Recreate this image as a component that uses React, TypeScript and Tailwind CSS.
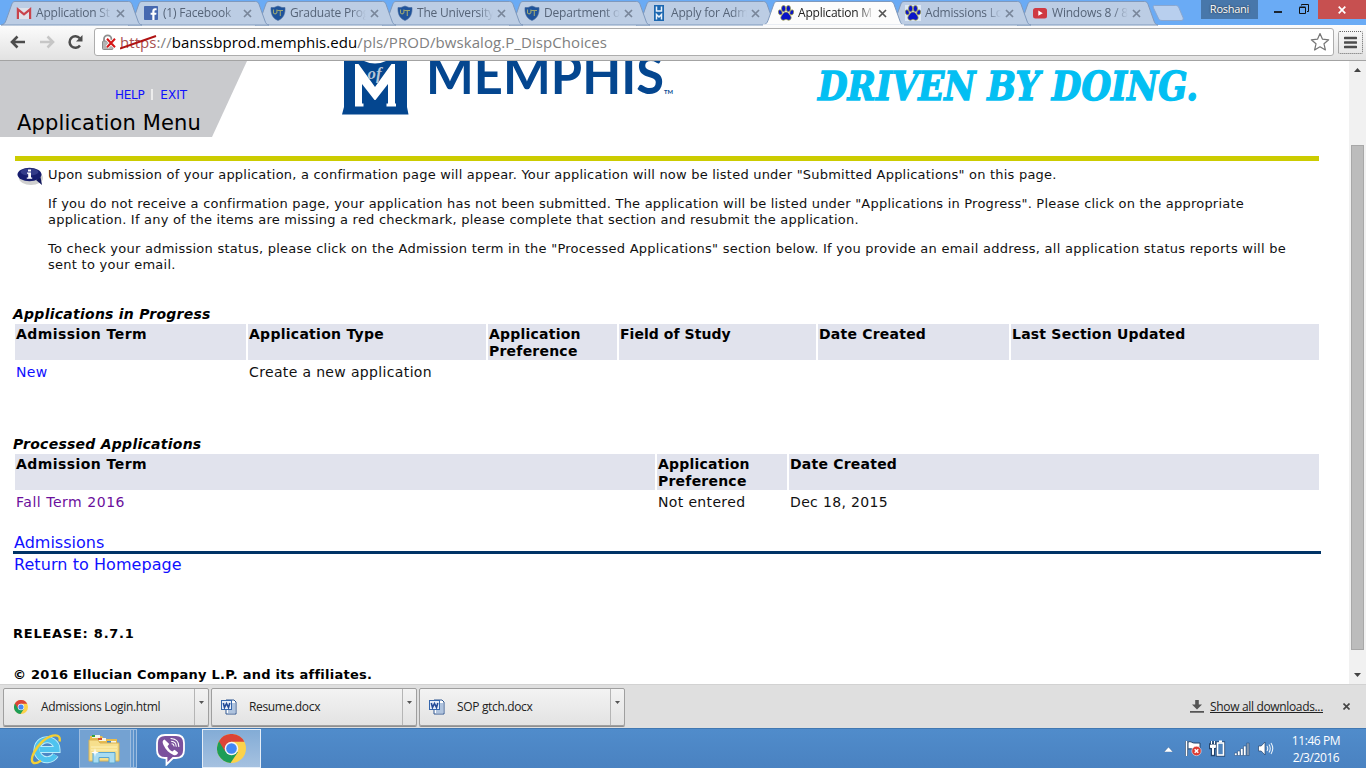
import type { CSSProperties, ReactNode } from 'react';

type Favicon = 'gmail' | 'facebook' | 'shield' | 'um' | 'paw' | 'youtube';

const tabs: { title: string; icon: Favicon; active?: boolean }[] = [
  { title: 'Application St', icon: 'gmail' },
  { title: '(1) Facebook', icon: 'facebook' },
  { title: 'Graduate Prog', icon: 'shield' },
  { title: 'The University', icon: 'shield' },
  { title: 'Department o', icon: 'shield' },
  { title: 'Apply for Adm', icon: 'um' },
  { title: 'Application M', icon: 'paw', active: true },
  { title: 'Admissions Lo', icon: 'paw' },
  { title: 'Windows 8 / 8', icon: 'youtube' },
];

function Paw() {
  return (
    <g fill="#0a14c8" stroke="#a9a83a" strokeWidth="0.7">
      <ellipse cx="5.6" cy="3.6" rx="2.1" ry="3.2" />
      <ellipse cx="10.4" cy="3.6" rx="2.1" ry="3.2" />
      <ellipse cx="2.2" cy="7.4" rx="1.9" ry="2.6" transform="rotate(-20 2.2 7.4)" />
      <ellipse cx="13.8" cy="7.4" rx="1.9" ry="2.6" transform="rotate(20 13.8 7.4)" />
      <path d="M8 7c2.200 0 3 1.900 4.100 3.200 1 1.200 1.400 2.500.8 3.600-.7 1.500-2.200 1.700-3.300 1.100-1-.5-2.200-.5-3.200 0-1.100.6-2.600.4-3.300-1.100-.6-1.100-.2-2.400.8-3.600C5 8.900 5.800 7 8 7z" />
    </g>
  );
}

function FaviconIcon({ icon, active }: { icon: Favicon; active?: boolean }) {
  return (
    <svg className="size-4 shrink-0" viewBox="0 0 16 16">
      {icon === 'gmail' && (
        <>
          <path d="M1 3h14v11H1z" fill="#dfe2ea" />
          <path d="M1.900 14V4.300L8 9.300l6.100-5V14" fill="none" stroke="#c9444c" strokeWidth="2.200" />
        </>
      )}
      {icon === 'facebook' && (
        <>
          <rect x="1" y="1" width="14" height="14" rx="0.8" fill="#4668b0" />
          <path d="M9.300 15V9.800H7.600V7.700h1.700V6.200c0-1.900 1-2.900 2.800-2.900h1.500v2h-1c-.8 0-1.100.4-1.100 1.100v1.300h2l-.3 2.100h-1.700V15z" fill="#fff" />
        </>
      )}
      {icon === 'shield' && (
        <>
          <path d="M1 2.500 4 2.500 8 1l4 1.500h3c.3 5.500-1 10.500-7 13C2 13 .7 8 1 2.500z" fill="#1f539b" stroke="#47699c" strokeWidth="0.6" />
          <path d="M3.500 4.500v3.500q1.700 2 3.400-.5V4.500M7.500 5.500H13M10.300 5.500v5.500" fill="none" stroke="#9aa574" strokeWidth="1.100" />
        </>
      )}
      {icon === 'um' && (
        <>
          <rect x="3" y="0" width="10" height="16" fill="#1c67b0" />
          <path d="M5.500 1.500V6h5V1.500M5.500 14.500v-5L8 12l2.500-2.500v5" fill="none" stroke="#eaf2fb" strokeWidth="1.500" />
        </>
      )}
      {icon === 'paw' && (
        <>
          {!active && <rect width="16" height="16" fill="#dde8f6" />}
          <Paw />
        </>
      )}
      {icon === 'youtube' && (
        <>
          <rect x="1" y="3" width="14" height="10.500" rx="2.500" fill="#cf3a42" />
          <path d="M6.300 5.500v5.300l4.500-2.600z" fill="#fff" />
        </>
      )}
    </svg>
  );
}

function BrowserTab({ title, icon, active, order }: { title: string; icon: Favicon; active?: boolean; order: number }) {
  const stack: CSSProperties = { zIndex: active ? 30 : 20 - order };
  return (
    <div className="relative h-[25px] w-[127px] shrink-0" style={stack}>
      <svg className="absolute top-0 left-0 overflow-visible" width="145" height="25" viewBox="0 0 145 25">
        <path
          d="M1 25c3-.5 4-2 5-4.500l5.500-15.500C12.500 2.500 13 1.500 15 1.500h113.500c2 0 2.800 1 3.600 3L138 21c.8 2.500 1.800 3.500 4 4z"
          fill={active ? '#fcfcfc' : '#bccde4'}
          stroke="#7f99bd"
          strokeWidth="1"
        />
        {active && <rect x="1" y="24.300" width="141" height="1.700" fill="#fcfcfc" />}
      </svg>
      <div className="relative flex h-[25px] w-[130px] items-center pt-[1px] pl-4">
        <FaviconIcon icon={icon} active={active} />
        <div
          className={
            'ml-1 w-[76px] overflow-hidden font-["Open_Sans",sans-serif] text-[12px] leading-4 tracking-[-0.2px] whitespace-nowrap [mask-image:linear-gradient(to_right,black_80%,transparent_100%)] ' +
            (active ? 'text-[#222]' : 'text-[#566478]')
          }
        >
          {title}
        </div>
        <svg className="ml-[4px] size-[9px] shrink-0" viewBox="0 0 9 9">
          <path d="M1 1l7 7M8 1L1 8" stroke={active ? '#555' : '#79869a'} strokeWidth="1.700" />
        </svg>
      </div>
    </div>
  );
}

function TabStrip() {
  return (
    <div className="flex h-[25px] bg-[#6aabf5]">
      {tabs.map((t, i) => (
        <BrowserTab key={i} order={i} {...t} />
      ))}
      <svg className="mt-[4px] ml-[8px] shrink-0" width="34" height="18" viewBox="0 0 34 18">
        <path d="M3.500 1.500h21c2 0 2.800.7 3.500 2.500l4 9.500c.7 2-.1 3-2 3H11c-2 0-3-.7-3.700-2.500L2.500 4c-.6-1.500-.4-2.500 1-2.500z" fill="#b8cfee" stroke="#8aa7d0" />
      </svg>
      <div className="ml-[16px] flex h-[19px] w-[57px] shrink-0 items-center justify-center bg-[#4877aa] font-['Open_Sans',sans-serif] text-[11px] tracking-[-0.25px] text-white [text-shadow:0_0_2px_#222]">
        Roshani
      </div>
      <div className="mt-[11px] ml-4 h-[2px] w-2 shrink-0 bg-[#1b2530]" />
      <svg className="mt-1 ml-[17px] shrink-0" width="10" height="10" viewBox="0 0 10 10">
        <path d="M.5 3.500h6v6h-6zM.5 3h6M2.500 1.500v-1h7v7h-1.500" fill="none" stroke="#111" />
      </svg>
      <div className="ml-auto flex h-[19px] w-12 shrink-0 items-center justify-center bg-[#c75050]">
        <svg width="8" height="8" viewBox="0 0 8 8">
          <path d="M.7.7l6.600 6.600M7.300.7L.7 7.300" stroke="#fff" strokeWidth="1.700" />
        </svg>
      </div>
    </div>
  );
}

function Toolbar() {
  return (
    <div className="flex h-9 items-center border-b border-[#a3a3a3] bg-linear-to-b from-[#fcfcfc] to-[#e2e2e2] pb-px">
      <svg className="ml-[10px]" width="16" height="14" viewBox="0 0 16 14">
        <path d="M15 7H3M7.500 1.500L2 7l5.500 5.500" fill="none" stroke="#4c4c4c" strokeWidth="2.600" />
      </svg>
      <svg className="ml-[13px]" width="16" height="14" viewBox="0 0 16 14">
        <path d="M1 7h12M8.500 1.500L14 7l-5.500 5.500" fill="none" stroke="#c6c6c6" strokeWidth="2.600" />
      </svg>
      <svg className="ml-[12px]" width="17" height="16" viewBox="0 0 17 16">
        <path d="M13 11.500A5.800 5.800 0 1 1 12.800 4.200" fill="none" stroke="#4c4c4c" strokeWidth="2.500" />
        <path d="M15.500 1v6.500H9z" fill="#4c4c4c" />
      </svg>
      <div className="ml-[10px] flex h-[28px] w-[1240px] items-center rounded-[3px] border border-[#adadad] bg-white">
        <svg className="ml-[6px] shrink-0" width="16" height="17" viewBox="0 0 16 17">
          <path d="M3 7.500V5a3.700 3.700 0 0 1 7.400 0v2.500" fill="none" stroke="#8e8e8e" strokeWidth="1.800" />
          <rect x="1.500" y="7" width="10.500" height="8.500" rx="1" fill="#b4b4b4" stroke="#8a8a8a" />
          <path d="M6 4.800l8 8.500M14 4.800l-8 8.500" stroke="#fff" strokeWidth="3.600" />
          <path d="M6 4.800l8 8.500M14 4.800l-8 8.500" stroke="#d51515" strokeWidth="2" />
        </svg>
        <div className="relative ml-[3px] w-[1190px] font-['Open_Sans',sans-serif] text-[15px] leading-5 tracking-[0.075px] whitespace-nowrap text-[#808080]">
          <span className="text-[#a8504f]">https</span>://<span className="text-black">banssbprod.memphis.edu</span>/pls/PROD/bwskalog.P_DispChoices
          <svg className="absolute top-[2px] left-0" width="38" height="16" viewBox="0 0 38 16">
            <path d="M0 14.500L36 2" stroke="#b01212" strokeWidth="1.900" />
          </svg>
        </div>
        <svg className="shrink-0" width="20" height="20" viewBox="0 0 20 20">
          <path d="M10 1.500l2.500 5.700 6.200.6-4.700 4 1.400 6.200L10 14.800 4.600 18 6 11.800l-4.700-4 6.200-.6z" fill="#fff" stroke="#757575" strokeWidth="1.200" strokeLinejoin="round" />
        </svg>
      </div>
      <div className="ml-1 flex h-[23px] w-[25px] items-center justify-center rounded-[2px] border border-dotted border-[#666]">
        <svg width="13" height="13" viewBox="0 0 13 13">
          <path d="M1 2h11M1 6.500h11M1 11h11" stroke="#4c4c4c" strokeWidth="2.600" strokeLinecap="round" />
        </svg>
      </div>
    </div>
  );
}

function Banner() {
  return (
    <div className="relative flex h-[76px] overflow-hidden">
      <div className="h-[76px] w-[247px] shrink-0 bg-[#c9cacd] pt-[25px] [clip-path:polygon(0_0,247px_0,212px_100%,0_100%)]">
        <div className="flex h-[17px] items-center pl-[115px] font-['DejaVu_Sans',sans-serif] text-[12px] text-[#1010ff]">
          <span className="tracking-[-0.3px]">HELP</span>
          <span className="ml-[7px] h-[11px] w-[2px] bg-[#ececec]" />
          <span className="ml-[7px]">EXIT</span>
        </div>
        <h1 className="mt-[7px] pl-[17px] font-['DejaVu_Sans',sans-serif] text-[21px] leading-[26px] tracking-[0.146px] text-black">Application Menu</h1>
      </div>
      <svg className="ml-[95px] shrink-0" width="340" height="60" viewBox="342 61 340 60">
        <path d="M344 61h63v46l1.500 7.500H342l2-7.500z" fill="#04468f" />
        <path d="M364 61q11 5 22 0z" fill="#fff" />
        <path d="M355 64h3.500L375 87l16.500-23H395v39.500h1v3h-9.500v-3H388V84l-12.500 16h-1L362 84v19.500h1.500v3H355z" fill="#fff" />
        <text x="367.500" y="78.500" fontFamily="Liberation Serif, serif" fontStyle="italic" fontWeight="700" fontSize="17" textLength="14" lengthAdjust="spacingAndGlyphs" fill="#b5c5d8">of</text>
        <text x="426" y="93.700" fontFamily="Lato, sans-serif" fontWeight="700" fontSize="53" textLength="238" lengthAdjust="spacingAndGlyphs" fill="#04468f">MEMPHIS</text>
        <text x="664" y="93.500" fontFamily="Lato, sans-serif" fontWeight="700" fontSize="6" textLength="9" lengthAdjust="spacingAndGlyphs" fill="#04468f">TM</text>
      </svg>
      <svg className="ml-[128px] shrink-0" width="400" height="60" viewBox="810 61 400 60">
        <text x="818" y="99.500" fontFamily="DejaVu Serif, serif" fontStyle="italic" fontWeight="700" fontSize="40" textLength="380" lengthAdjust="spacingAndGlyphs" fill="#03bff3" stroke="#03bff3" strokeWidth="1.400">DRIVEN BY DOING.</text>
      </svg>
    </div>
  );
}

function Instructions() {
  return (
    <div className="mt-[6px] flex pl-4">
      <svg className="shrink-0" width="30" height="22" viewBox="0 0 30 22">
        <ellipse cx="15" cy="11" rx="12" ry="7" fill="#bbb" opacity="0.700" />
        <path d="M20 13l6 5-1.500-8z" fill="#10165c" />
        <ellipse cx="13.500" cy="7.500" rx="12" ry="6.700" fill="#161d6e" />
        <ellipse cx="13.500" cy="5" rx="9" ry="3.500" fill="#47509b" opacity="0.600" />
        <path d="M12 2.500h3v2h-3zM11 5.500h4v5h1.200v1.300H10.800v-1.300h1.400V6.800H11z" fill="#fff" />
      </svg>
      <div className="ml-[2px] flex flex-col gap-[13px] font-['DejaVu_Sans',sans-serif] text-[13px] leading-4 tracking-[0.212px] whitespace-nowrap text-[#111]">
        <p>Upon submission of your application, a confirmation page will appear. Your application will now be listed under "Submitted Applications" on this page.</p>
        <p>
          If you do not receive a confirmation page, your application has not been submitted. The application will be listed under "Applications in Progress". Please click on the appropriate
          <br />
          <span className="tracking-[0.22px]">application. If any of the items are missing a red checkmark, please complete that section and resubmit the application.</span>
        </p>
        <p>
          <span className="tracking-[0.254px]">To check your admission status, please click on the Admission term in the "Processed Applications" section below. If you provide an email address, all application status reports will be</span>
          <br />
          <span className="tracking-[0.26px]">sent to your email.</span>
        </p>
      </div>
    </div>
  );
}

function HeadCell({ children }: { children: ReactNode }) {
  return <div className="h-9 bg-[#e1e3ed] pt-[2px] pl-px text-[14px] leading-[17px] font-bold tracking-[0.22px]">{children}</div>;
}

function Cell({ children }: { children?: ReactNode }) {
  return <div className="pt-px pb-[2px] pl-px text-[14px] leading-[18px] tracking-[0.35px] text-[#111]">{children}</div>;
}

function SectionTitle({ children }: { children: ReactNode }) {
  return <h2 className="h-[18px] pl-[13px] text-[14px] leading-4 font-bold tracking-[0.255px] italic">{children}</h2>;
}

function Page() {
  return (
    <div className="h-[624px] w-[1349px] overflow-hidden bg-white font-['DejaVu_Sans',sans-serif] text-black">
      <Banner />
      <div className="mt-[19px] ml-[15px] h-[5px] w-[1304px] bg-[#cccc00]" />
      <Instructions />
      <div className="mt-[33px]">
        <SectionTitle>Applications in Progress</SectionTitle>
        <div className="ml-[15px] grid w-[1304px] grid-cols-[231px_238px_129px_197px_191px_1fr] gap-x-[2px] gap-y-[2px]">
          <HeadCell><span className="tracking-[0.44px]">Admission Term</span></HeadCell>
          <HeadCell><span className="tracking-[0.27px]">Application Type</span></HeadCell>
          <HeadCell>Application<br />Preference</HeadCell>
          <HeadCell><span className="tracking-[0.05px]">Field of Study</span></HeadCell>
          <HeadCell>Date Created</HeadCell>
          <HeadCell>Last Section Updated</HeadCell>
          <Cell><a className="text-[#1010ff]">New</a></Cell>
          <Cell>Create a new application</Cell>
        </div>
      </div>
      <div className="mt-[53px]">
        <SectionTitle>Processed Applications</SectionTitle>
        <div className="ml-[15px] grid w-[1304px] grid-cols-[640px_130px_1fr] gap-x-[2px] gap-y-[2px]">
          <HeadCell><span className="tracking-[0.44px]">Admission Term</span></HeadCell>
          <HeadCell>Application<br />Preference</HeadCell>
          <HeadCell>Date Created</HeadCell>
          <Cell><a className="tracking-[0.53px] text-[#6b0f9c]">Fall Term 2016</a></Cell>
          <Cell>Not entered</Cell>
          <Cell>Dec 18, 2015</Cell>
        </div>
      </div>
      <div className="mt-[19px] ml-[13px] w-[1308px] text-[16px] leading-[22px] text-[#1010ff]">
        <div className="h-[19px] pl-px">Admissions</div>
        <div className="h-[3px] bg-[#003366]" />
        <div className="pl-px tracking-[0.065px]">Return to Homepage</div>
      </div>
      <div className="mt-[50px] ml-[13px] text-[13px] leading-4 font-bold">
        <div className="tracking-[0.75px]">RELEASE: 8.7.1</div>
        <div className="mt-[25px] tracking-[0.258px]">© 2016 Ellucian Company L.P. and its affiliates.</div>
      </div>
    </div>
  );
}

function Scrollbar() {
  return (
    <div className="flex h-[624px] w-[17px] flex-col items-center bg-[#f1f1f1]">
      <svg className="mt-[7px] shrink-0" width="7" height="4" viewBox="0 0 7 4"><path d="M0 4L3.500 0 7 4z" fill="#444" /></svg>
      <div className="mt-[73px] h-[505px] w-[13px] shrink-0 border border-[#a8a8a8] bg-[#bcbcbc]" />
      <svg className="mt-[23px] shrink-0" width="7" height="4" viewBox="0 0 7 4"><path d="M0 0h7L3.500 4z" fill="#444" /></svg>
    </div>
  );
}

function ChromeLogo({ size }: { size: number }) {
  return (
    <svg className="shrink-0" width={size} height={size} viewBox="0 0 30 30">
      <circle cx="15" cy="15" r="15" fill="#fcd24a" />
      <path d="M15 15L2 7.500A15 15 0 0 0 14 30l7.500-11z" fill="#1d9d57" />
      <path d="M15 8h13.300A15 15 0 0 0 2 7.500L8.500 18z" fill="#dc4437" />
      <circle cx="15" cy="15" r="7" fill="#f5f5f5" />
      <circle cx="15" cy="15" r="5.500" fill="#4387f4" />
    </svg>
  );
}

function WordIcon() {
  return (
    <svg className="shrink-0" width="16" height="16" viewBox="0 0 16 16">
      <path d="M5 1h8l2 2v12H5z" fill="#fff" stroke="#2c5590" />
      <path d="M11 5h3M11 7h3M11 9h3M7 11h7M7 13h7" stroke="#5f87bd" />
      <rect x="0.500" y="1.500" width="10" height="9" fill="#e8effa" stroke="#3667ad" />
      <path d="M2.300 4l1.200 4.500L5.500 4.500l2 4L8.800 4" fill="none" stroke="#244b98" strokeWidth="1.600" />
    </svg>
  );
}

function Download({ name, icon }: { name: string; icon: ReactNode }) {
  return (
    <div className="flex h-[38px] w-[206px] rounded-[2px] border border-[#9f9f9f] bg-linear-to-b from-[#f3f3f3] to-[#e3e3e3] shadow-[0_1px_0_#8f8f8f]">
      <div className="flex w-[191px] items-center border-r border-[#b5b5b5] pl-[9px]">
        <span className="flex w-7 shrink-0 items-center">{icon}</span>
        <span className="font-['Open_Sans',sans-serif] text-[12px] tracking-[-0.34px] text-[#222]">{name}</span>
      </div>
      <svg className="mt-[12px] ml-[4px]" width="5" height="3" viewBox="0 0 5 3"><path d="M0 0h5L2.500 3z" fill="#555" /></svg>
    </div>
  );
}

function DownloadShelf() {
  return (
    <div className="flex h-[44px] border-t border-[#d2d2d2] bg-[#dfdfdf] pt-[3px] pl-[3px]">
      <div className="flex gap-[2px]">
        <Download name="Admissions Login.html" icon={<span className="pl-px"><ChromeLogo size={14} /></span>} />
        <Download name="Resume.docx" icon={<WordIcon />} />
        <Download name="SOP gtch.docx" icon={<WordIcon />} />
      </div>
      <div className="mr-4 ml-auto flex h-[36px] items-center">
        <svg width="14" height="13" viewBox="0 0 14 13"><path d="M5.200 0h3.600v4.500H12L7 9.500 2 4.500h3.200zM0 11h14v1.800H0z" fill="#555" /></svg>
        <span className="ml-[6px] pt-px font-['Open_Sans',sans-serif] text-[12px] tracking-[-0.337px] text-[#222] underline underline-offset-1">Show all downloads...</span>
        <svg className="ml-[20px]" width="7" height="7" viewBox="0 0 7 7"><path d="M.5.5l6 6M6.500.5l-6 6" stroke="#444" strokeWidth="1.600" /></svg>
      </div>
    </div>
  );
}

function Taskbar() {
  return (
    <div className="flex h-10 items-center border-t border-[#4178b2] bg-linear-to-b from-[#508ccb] to-[#4a82c1] text-white">
      <svg className="ml-[30px] shrink-0" width="33" height="34" viewBox="0 0 33 34">
        <path d="M25.500 23A10 10 0 1 1 27 17.500H10" fill="none" stroke="#b9ecfb" strokeWidth="7" />
        <path d="M25.500 23A10 10 0 1 1 27 17.500H10" fill="none" stroke="#4fc3ee" strokeWidth="5.200" />
        <path d="M29.500 9.500C31.500 1 22 2 13.500 8.500 5 16-.5 27 3 30.500c2 1.600 5 .2 8-1.700" fill="none" stroke="#f4cf33" strokeWidth="2.400" />
      </svg>
      <div className="ml-[16px] flex h-[39px] w-[58px] shrink-0">
        <div className="flex w-[52px] items-center justify-center border border-[#9dbde0] bg-[#74a2d2]">
          <svg className="mr-[2px]" width="34" height="32" viewBox="0 0 34 32">
            <path d="M3 3h12l2 3h13v9H3z" fill="#e9bc4c" />
            <path d="M5 2h8v3H5z" fill="#f6f6e8" /><path d="M5 2h3v2H5z" fill="#32a13b" />
            <path d="M11 5h8v3h-8z" fill="#f6f6e8" /><path d="M11 5h4v2h-4z" fill="#d44734" />
            <path d="M20 8h9v3h-9z" fill="#f6f6e8" /><path d="M20 8h4v2h-4z" fill="#3b86cc" />
            <path d="M2 7h9l2 3h19v18H2z" fill="#f6df8c" stroke="#d9b255" />
            <path d="M4 14h26M4 17h26" stroke="#fff3ba" />
            <path d="M6 30V19.500h22V30h-6v-5.500H12V30z" fill="#a8dcf2" stroke="#5ba5cf" />
            <path d="M8 15l.7 3.600 3.300.9-3.300.9L8 24l-.7-3.600-3.300-.9 3.300-.9z" fill="#fff" />
          </svg>
        </div>
        <div className="w-[3px] border-y border-r border-[#9dbde0] bg-[#6397ce]" />
        <div className="w-[3px] border-y border-r border-[#9dbde0] bg-[#5a91ca]" />
      </div>
      <svg className="ml-[17px] shrink-0" width="34" height="34" viewBox="0 0 34 34">
        <path d="M11 3h11c5 0 8 3 8 8v7c0 5-3 8-8 8h-3l-6.500 6.500V26H11c-5 0-8-3-8-8v-7c0-5 3-8 8-8z" fill="#7b519d" stroke="#fff" strokeWidth="1.800" />
        <path d="M10.500 7.500c-2 1-2.500 2.500-1 5.500 2.500 5 5.500 8 10 10 2.500 1 4.500-1 4.500-2.500l-3.500-2.700-2.200 1.700c-2.600-1.300-3.800-3-4.800-5.300l1.700-2.200z" fill="#fff" />
        <path d="M17 6.500c4.800.3 7.800 3.300 7.800 8M17.500 9.300c3 .3 4.500 2.200 4.700 4.900M18 11.800c1.300.2 1.800.9 2 2.200" fill="none" stroke="#fff" strokeWidth="1.100" strokeLinecap="round" />
      </svg>
      <div className="ml-[14px] flex h-[39px] w-[59px] shrink-0 items-center justify-center border border-[#e5eef8] bg-linear-to-b from-[#83acd6] to-[#a5c1e0]">
        <ChromeLogo size={29} />
      </div>
      <div className="mr-6 ml-auto flex items-center">
        <svg className="mt-[1px]" width="9" height="5" viewBox="0 0 9 5"><path d="M0 5L4.500 0 9 5z" fill="#fff" stroke="#345d8d" strokeWidth="0.400" /></svg>
        <svg className="ml-[12px]" width="17" height="17" viewBox="0 0 17 17">
          <path d="M1.500 1v15" stroke="#23446c" strokeWidth="3" /><path d="M3 2c3-1.500 4 1.500 7 1h5v7c-4 1-6-2-12-1z" fill="#fff" stroke="#23446c" />
          <path d="M1.500 1v15" stroke="#fff" strokeWidth="1.600" />
          <circle cx="11.500" cy="11" r="4.700" fill="#dd3b31" stroke="#fff" strokeWidth="0.500" />
          <path d="M9.700 9.200l3.600 3.600M13.300 9.200l-3.600 3.600" stroke="#fff" strokeWidth="1.500" />
        </svg>
        <svg className="ml-[7px]" width="17" height="17" viewBox="0 0 17 17">
          <path d="M2.500 1v3M5.500 1v3M1 4.500h6v3.500H5v7H3V8H1z" fill="#fff" stroke="#23446c" strokeWidth="2.400" />
          <path d="M2.500 1v3M5.500 1v3M1.500 5h5v2.500h-2v7h-1v-7h-2z" fill="#fff" stroke="#fff" />
          <rect x="8.500" y="3" width="6" height="12" fill="#4f84bd" stroke="#23446c" strokeWidth="3.200" />
          <rect x="8.500" y="3" width="6" height="12" fill="#4f84bd" stroke="#fff" strokeWidth="1.600" /><path d="M10 .5h3v2h-3z" fill="#fff" />
        </svg>
        <svg className="ml-[8px]" width="16" height="14" viewBox="0 0 16 14">
          <path d="M.5 11h2.500v2.500H.5zM3.500 9H6v4.500H3.500zM6.500 6.500H9v7H6.500zM9.500 4H12v9.500H9.500z" fill="#fff" stroke="#2e5684" strokeWidth="0.600" />
          <path d="M12.700 1h2.500v12.500h-2.500z" fill="#8ea0b4" stroke="#2e5684" strokeWidth="0.600" />
        </svg>
        <svg className="ml-[8px]" width="16" height="15" viewBox="0 0 16 15">
          <path d="M.5 5h2.700L7 1v13l-3.800-4H.5z" fill="#fff" stroke="#23446c" strokeWidth="0.700" />
          <path d="M9 5q1.500 2.500 0 5M11 3.500q2.500 4 0 8M13 2q3.500 5.500 0 11" fill="none" stroke="#e8f1fa" strokeWidth="1.100" />
        </svg>
        <div className="ml-4 flex w-[52px] flex-col items-center font-['Open_Sans',sans-serif] text-[12px] leading-[17px] tracking-[-0.42px] whitespace-nowrap">
          <span>11:46 PM</span>
          <span>2/3/2016</span>
        </div>
      </div>
    </div>
  );
}

export default function App() {
  return (
    <div className="flex h-[768px] w-[1366px] flex-col overflow-hidden bg-white">
      <TabStrip />
      <Toolbar />
      <div className="flex h-[623px] overflow-hidden">
        <Page />
        <Scrollbar />
      </div>
      <DownloadShelf />
      <Taskbar />
    </div>
  );
}
